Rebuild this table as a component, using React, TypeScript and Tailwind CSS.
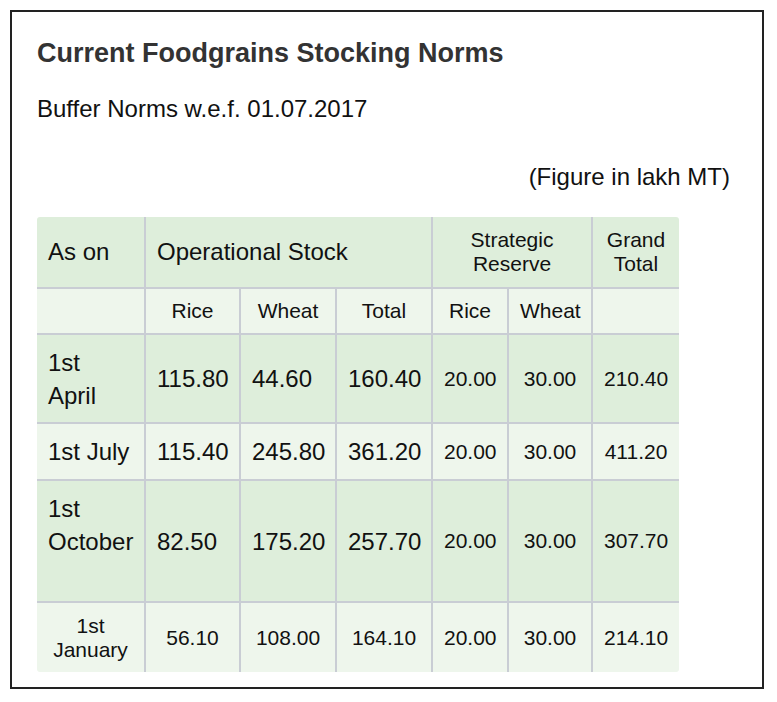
import React from 'react';

// ── Data ──────────────────────────────────────────────────────────
interface Row {
  label:    React.ReactNode;
  values:   string[];
  reserve:  string[];
  grand:    string;
  dark:     boolean;
  height:   string;
  small?:   boolean;
  topLabel?: boolean;
}

const rows: Row[] = [
  {
    label: <>1st<br />April</>,
    values: ['115.80', '44.60', '160.40'],
    reserve: ['20.00', '30.00'],
    grand: '210.40',
    dark: true,
    height: 'h-[89px]',
  },
  {
    label: '1st July',
    values: ['115.40', '245.80', '361.20'],
    reserve: ['20.00', '30.00'],
    grand: '411.20',
    dark: false,
    height: 'h-[57px]',
  },
  {
    label: <>1st<br />October</>,
    values: ['82.50', '175.20', '257.70'],
    reserve: ['20.00', '30.00'],
    grand: '307.70',
    dark: true,
    height: 'h-[122px]',
    topLabel: true,
  },
  {
    label: <>1st<br />January</>,
    values: ['56.10', '108.00', '164.10'],
    reserve: ['20.00', '30.00'],
    grand: '214.10',
    dark: false,
    height: 'h-[70px]',
    small: true,
  },
];

const cell = 'border-2 border-[#c9cdd4] px-[11px] py-0';

// ── Component ─────────────────────────────────────────────────────
export default function App() {
  return (
    <div className="bg-white w-[777px] h-[702px] pt-[10px] pl-[10px] font-['Liberation_Sans',Arial,sans-serif] text-[#111]">
      <div className="w-[754px] h-[679px] border-2 border-[#222] pt-[26px] pl-[25px] pr-[32px]">

        {/* ── Headings ── */}
        <h1 className="text-[27px] leading-[31px] font-bold text-[#333]">
          Current Foodgrains Stocking Norms
        </h1>
        <p className="mt-[26px] text-[24px] leading-[28px]">Buffer Norms w.e.f. 01.07.2017</p>
        <p className="mt-[40px] text-[24px] leading-[28px] text-right">(Figure in lakh MT)</p>

        {/* ── Table ── */}
        <div className="mt-[26px] w-[642px] rounded-[3px] overflow-hidden">
          <table className="w-[642px] table-fixed border-collapse border-hidden">
            <colgroup>
              <col className="w-[108px]" />
              <col className="w-[95px]" />
              <col className="w-[96px]" />
              <col className="w-[96px]" />
              <col className="w-[76px]" />
              <col className="w-[84px]" />
              <col className="w-[87px]" />
            </colgroup>
            <tbody>
              <tr className="h-[71px] bg-[#deeedb]">
                <td className={`${cell} text-[24px] leading-[28px] text-left`}>As on</td>
                <td colSpan={3} className={`${cell} text-[24px] leading-[28px] text-left`}>
                  Operational Stock
                </td>
                <td colSpan={2} className={`${cell} text-[21px] leading-[24px] text-center`}>
                  Strategic<br />Reserve
                </td>
                <td className={`${cell} text-[21px] leading-[24px] text-center`}>
                  Grand<br />Total
                </td>
              </tr>
              <tr className="h-[46px] bg-[#eef6ec] text-[21px] leading-[24px] text-center">
                <td className={cell}></td>
                <td className={cell}>Rice</td>
                <td className={cell}>Wheat</td>
                <td className={cell}>Total</td>
                <td className={cell}>Rice</td>
                <td className={cell}>Wheat</td>
                <td className={cell}></td>
              </tr>
              {rows.map((r, i) => {
                const main = r.small
                  ? 'text-[21px] leading-[24px] text-center'
                  : 'text-[24px] leading-[33px] text-left';
                return (
                  <tr key={i} className={`${r.height} ${r.dark ? 'bg-[#deeedb]' : 'bg-[#eef6ec]'}`}>
                    <td className={`${cell} ${main} ${r.topLabel ? 'align-top pt-[11px]' : ''}`}>
                      {r.label}
                    </td>
                    {r.values.map((v, j) => (
                      <td key={j} className={`${cell} ${main}`}>{v}</td>
                    ))}
                    {r.reserve.map((v, j) => (
                      <td key={j} className={`${cell} text-[21px] leading-[24px] text-center`}>{v}</td>
                    ))}
                    <td className={`${cell} text-[21px] leading-[24px] text-center`}>{r.grand}</td>
                  </tr>
                );
              })}
            </tbody>
          </table>
        </div>

      </div>
    </div>
  );
}
